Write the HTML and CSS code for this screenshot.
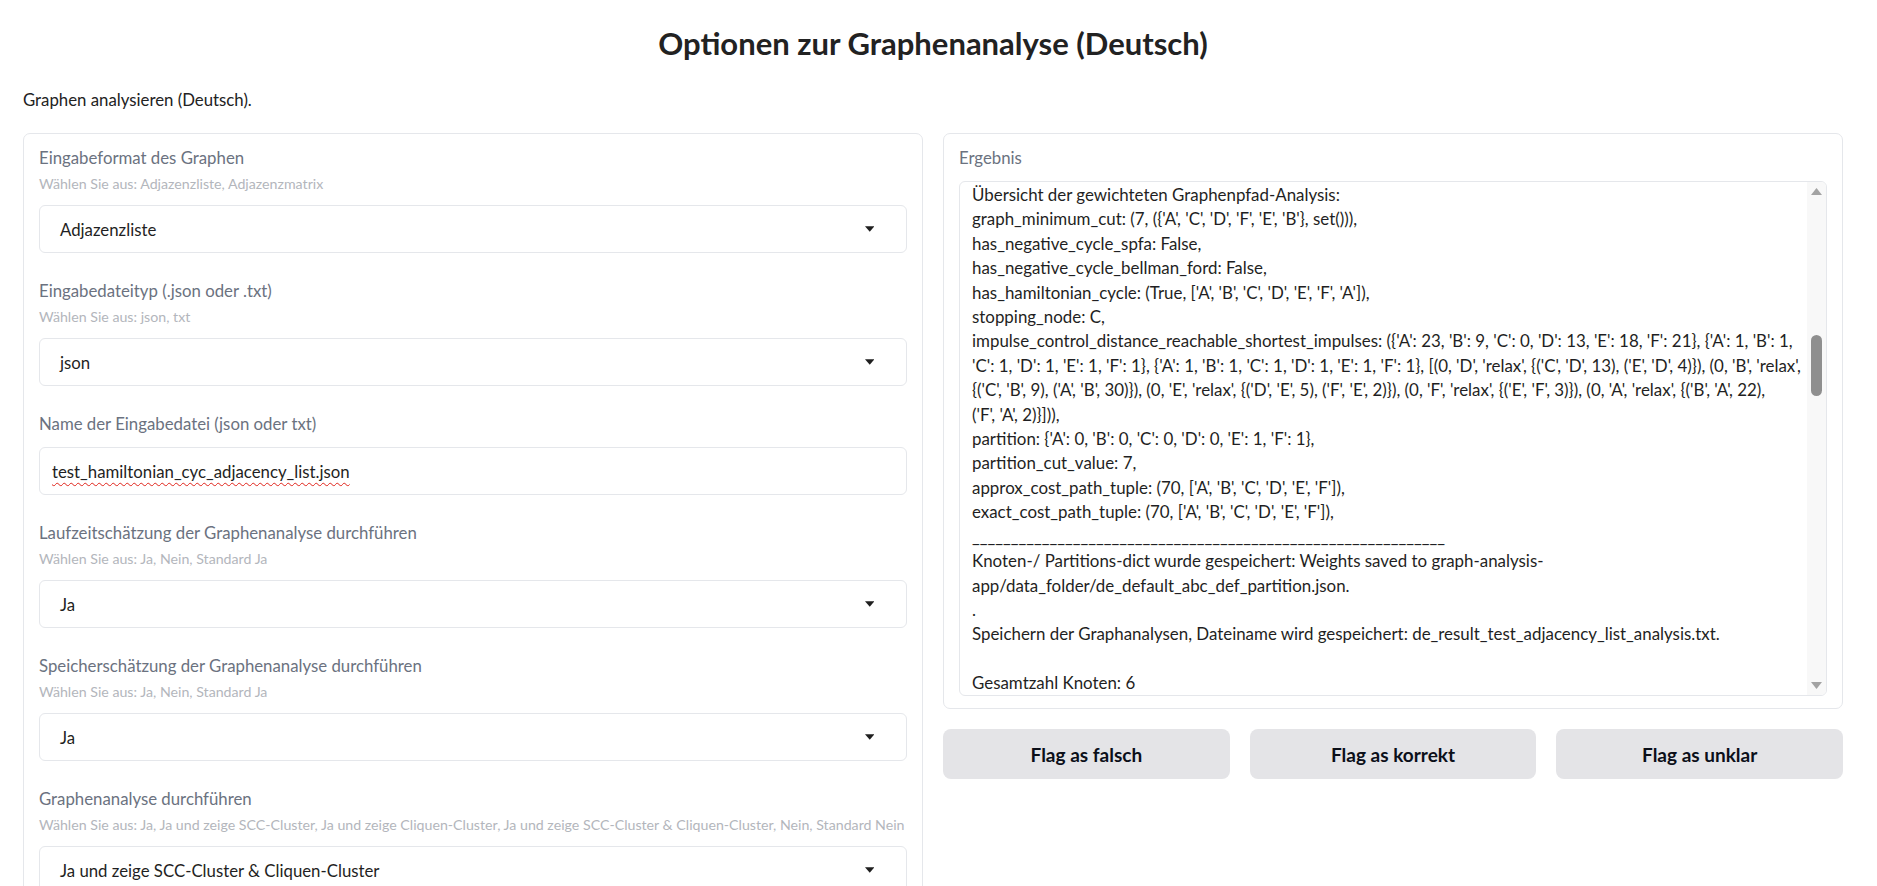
FILE: index.html
```html
<!DOCTYPE html>
<html lang="de">
<head>
<meta charset="utf-8">
<title>Optionen zur Graphenanalyse (Deutsch)</title>
<link rel="stylesheet" href="styles.css">
</head>
<body>
<div class="page">
  <h1 class="title">Optionen zur Graphenanalyse (Deutsch)</h1>
  <p class="desc">Graphen analysieren (Deutsch).</p>
  <div class="row">
    <div class="panel form">
      <div class="field">
        <div class="label">Eingabeformat des Graphen</div>
        <div class="info">Wählen Sie aus: Adjazenzliste, Adjazenzmatrix</div>
        <div class="select"><span>Adjazenzliste</span><svg class="caret" viewBox="0 0 10 6"><path d="M0 0H10L5 6Z"/></svg></div>
      </div>
      <div class="field">
        <div class="label">Eingabedateityp (.json oder .txt)</div>
        <div class="info">Wählen Sie aus: json, txt</div>
        <div class="select"><span>json</span><svg class="caret" viewBox="0 0 10 6"><path d="M0 0H10L5 6Z"/></svg></div>
      </div>
      <div class="field">
        <div class="label">Name der Eingabedatei (json oder txt)</div>
        <div class="textbox"><span class="misspelled">test_hamiltonian_cyc_adjacency_list.json</span></div>
      </div>
      <div class="field">
        <div class="label">Laufzeitschätzung der Graphenanalyse durchführen</div>
        <div class="info">Wählen Sie aus: Ja, Nein, Standard Ja</div>
        <div class="select"><span>Ja</span><svg class="caret" viewBox="0 0 10 6"><path d="M0 0H10L5 6Z"/></svg></div>
      </div>
      <div class="field">
        <div class="label">Speicherschätzung der Graphenanalyse durchführen</div>
        <div class="info">Wählen Sie aus: Ja, Nein, Standard Ja</div>
        <div class="select"><span>Ja</span><svg class="caret" viewBox="0 0 10 6"><path d="M0 0H10L5 6Z"/></svg></div>
      </div>
      <div class="field">
        <div class="label">Graphenanalyse durchführen</div>
        <div class="info">Wählen Sie aus: Ja, Ja und zeige SCC-Cluster, Ja und zeige Cliquen-Cluster, Ja und zeige SCC-Cluster &amp; Cliquen-Cluster, Nein, Standard Nein</div>
        <div class="select"><span>Ja und zeige SCC-Cluster &amp; Cliquen-Cluster</span><svg class="caret" viewBox="0 0 10 6"><path d="M0 0H10L5 6Z"/></svg></div>
      </div>
    </div>
    <div class="col-right">
      <div class="panel result">
        <div class="label">Ergebnis</div>
        <div class="textarea">
          <div class="text">
            <div class="ln">Übersicht der gewichteten Graphenpfad-Analysis:</div>
            <div class="ln">graph_minimum_cut: (7, ({'A', 'C', 'D', 'F', 'E', 'B'}, set())),</div>
            <div class="ln">has_negative_cycle_spfa: False,</div>
            <div class="ln">has_negative_cycle_bellman_ford: False,</div>
            <div class="ln">has_hamiltonian_cycle: (True, ['A', 'B', 'C', 'D', 'E', 'F', 'A']),</div>
            <div class="ln">stopping_node: C,</div>
            <div class="ln">impulse_control_distance_reachable_shortest_impulses: ({'A': 23, 'B': 9, 'C': 0, 'D': 13, 'E': 18, 'F': 21}, {'A': 1, 'B': 1,</div>
            <div class="ln">'C': 1, 'D': 1, 'E': 1, 'F': 1}, {'A': 1, 'B': 1, 'C': 1, 'D': 1, 'E': 1, 'F': 1}, [(0, 'D', 'relax', {('C', 'D', 13), ('E', 'D', 4)}), (0, 'B', 'relax',</div>
            <div class="ln">{('C', 'B', 9), ('A', 'B', 30)}), (0, 'E', 'relax', {('D', 'E', 5), ('F', 'E', 2)}), (0, 'F', 'relax', {('E', 'F', 3)}), (0, 'A', 'relax', {('B', 'A', 22),</div>
            <div class="ln">('F', 'A', 2)}])),</div>
            <div class="ln">partition: {'A': 0, 'B': 0, 'C': 0, 'D': 0, 'E': 1, 'F': 1},</div>
            <div class="ln">partition_cut_value: 7,</div>
            <div class="ln">approx_cost_path_tuple: (70, ['A', 'B', 'C', 'D', 'E', 'F']),</div>
            <div class="ln">exact_cost_path_tuple: (70, ['A', 'B', 'C', 'D', 'E', 'F']),</div>
            <div class="ln">_____________________________________________________________</div>
            <div class="ln">Knoten-/ Partitions-dict wurde gespeichert: Weights saved to graph-analysis-</div>
            <div class="ln">app/data_folder/de_default_abc_def_partition.json.</div>
            <div class="ln">.</div>
            <div class="ln">Speichern der Graphanalysen, Dateiname wird gespeichert: de_result_test_adjacency_list_analysis.txt.</div>
            <div class="ln"> </div>
            <div class="ln">Gesamtzahl Knoten: 6</div>
          </div>
          <div class="scrollbar">
            <div class="sb-btn"><svg class="sb-arrow" viewBox="0 0 11 7"><path d="M0 7L5.5 0L11 7Z"/></svg></div>
            <div class="sb-track"><div class="sb-thumb"></div></div>
            <div class="sb-btn"><svg class="sb-arrow" viewBox="0 0 11 7"><path d="M0 0H11L5.5 7Z"/></svg></div>
          </div>
        </div>
      </div>
      <div class="buttons">
        <button class="btn">Flag as falsch</button>
        <button class="btn">Flag as korrekt</button>
        <button class="btn">Flag as unklar</button>
      </div>
    </div>
  </div>
</div>
</body>
</html>
```

FILE: styles.css
```css
* { box-sizing: border-box; }
html, body { margin: 0; padding: 0; background: #ffffff; }
body {
  font-family: Lato, "Noto Sans", sans-serif;
  color: #27272a;
  height: 886px;
  overflow: hidden;
}
.page { padding: 23px 34px 0 23px; }
.title {
  margin: 0;
  font-size: 31px;
  font-weight: 700;
  line-height: 40px;
  text-align: center;
  color: #222222;
}
.desc {
  margin: 25px 0 0;
  font-size: 16.8px;
  line-height: 24px;
  color: #222222;
}
.row {
  display: grid;
  grid-template-columns: minmax(0, 1fr) minmax(0, 1fr);
  gap: 20px;
  margin-top: 21px;
  align-items: start;
}
.panel {
  border: 1px solid #e5e7eb;
  border-radius: 7px;
  background: #ffffff;
}
.form {
  padding: 14px 15px 16px;
  display: flex;
  flex-direction: column;
  gap: 28px;
}
.col-right {
  display: flex;
  flex-direction: column;
  gap: 20px;
}
.result { padding: 14px 15px 12px; }
.label {
  font-size: 16.8px;
  line-height: 20px;
  color: #6b7280;
}
.info {
  margin-top: 6px;
  font-size: 14.2px;
  line-height: 20px;
  color: #b3b6bc;
  white-space: nowrap;
}
.select, .textbox {
  margin-top: 13px;
  height: 48px;
  border: 1px solid #e5e7eb;
  border-radius: 6px;
  display: flex;
  align-items: center;
  font-size: 16.8px;
  color: #1f1f23;
  background: #ffffff;
}
.info + .select { margin-top: 11px; }
.select {
  justify-content: space-between;
  padding: 0 32px 0 20px;
}
.caret { width: 9.5px; height: 6px; fill: #1f1f1f; }
.textbox { padding: 0 12px; }
.misspelled {
  text-decoration: underline wavy #e0241b;
  text-decoration-thickness: 1px;
  text-underline-offset: 4px;
  text-decoration-skip-ink: none;
}
.textarea {
  margin-top: 13px;
  height: 515px;
  border: 1px solid #e5e7eb;
  border-radius: 6px;
  display: flex;
  overflow: hidden;
}
.text {
  flex: 1 1 auto;
  min-width: 0;
  padding: 1px 12px 0;
  font-size: 16.9px;
  line-height: 24.4px;
  color: #1f1f23;
  overflow: hidden;
}
.ln { white-space: pre; }
.scrollbar {
  flex: 0 0 19px;
  background: #f8f8f8;
  display: flex;
  flex-direction: column;
}
.sb-btn {
  height: 19px;
  display: flex;
  align-items: center;
  justify-content: center;
}
.sb-arrow { width: 11px; height: 7px; fill: #a3a3a3; }
.sb-track { flex: 1 1 auto; }
.sb-thumb {
  margin: 134px auto 0;
  width: 11px;
  height: 61px;
  border-radius: 6px;
  background: #8f8f8f;
}
.buttons {
  display: flex;
  gap: 20px;
}
.btn {
  flex: 1 1 0;
  height: 50px;
  border: 0;
  border-radius: 8px;
  background: #e4e4e7;
  font-family: Lato, "Noto Sans", sans-serif;
  font-size: 19px;
  font-weight: 700;
  color: #0b0f19;
}
```
